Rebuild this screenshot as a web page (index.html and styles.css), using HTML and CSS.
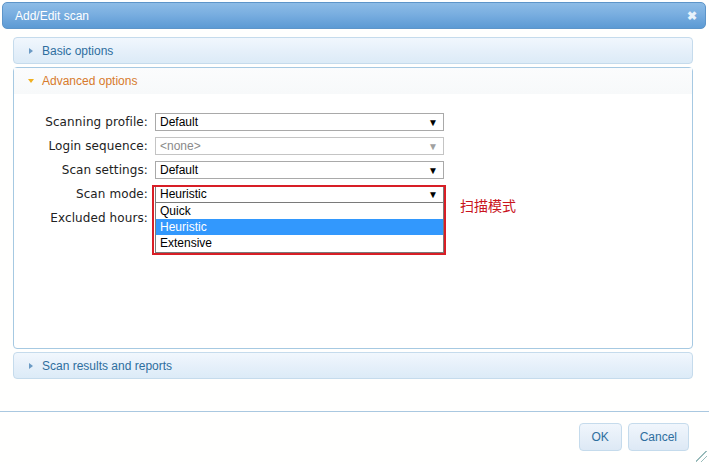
FILE: index.html
```html
<!DOCTYPE html>
<html>
<head>
<meta charset="utf-8">
<link rel="stylesheet" href="styles.css">
</head>
<body>
<div class="dialog">
  <div class="titlebar">
    <span class="title">Add/Edit scan</span>
    <span class="close">&#x2716;</span>
  </div>
  <div class="body">
    <div class="panel collapsed">
      <div class="phead"><span class="arrow right"></span><span class="ptext">Basic options</span></div>
    </div>
    <div class="panel open">
      <div class="phead"><span class="arrow down"></span><span class="ptext">Advanced options</span></div>
      <div class="pcontent">
        <div class="form">
          <label>Scanning profile:</label>
          <div class="select"><span>Default</span><span class="caret">&#9660;</span></div>
          <label>Login sequence:</label>
          <div class="select disabled"><span>&lt;none&gt;</span><span class="caret">&#9660;</span></div>
          <label>Scan settings:</label>
          <div class="select"><span>Default</span><span class="caret">&#9660;</span></div>
          <label>Scan mode:</label>
          <div class="dropwrap">
            <div class="select active"><span>Heuristic</span><span class="caret">&#9660;</span></div>
            <ul class="droplist">
              <li>Quick</li>
              <li class="sel">Heuristic</li>
              <li>Extensive</li>
            </ul>
            <div class="redbox"></div>
            <span class="note">扫描模式</span>
          </div>
          <label>Excluded hours:</label>
          <div class="select hidden"></div>
        </div>
      </div>
    </div>
    <div class="panel collapsed">
      <div class="phead"><span class="arrow right"></span><span class="ptext">Scan results and reports</span></div>
    </div>
  </div>
  <div class="footer">
    <button class="btn">OK</button>
    <button class="btn">Cancel</button>
    <span class="grip"></span>
  </div>
</div>
</body>
</html>
```
FILE: styles.css
```css
html, body {
  margin: 0;
  padding: 0;
  background: #fffffe;
}
.dialog {
  width: 709px;
  height: 464px;
  position: relative;
  font-family: "Liberation Sans", Arial, sans-serif;
  font-size: 12px;
  background: #fffffe;
  overflow: hidden;
}
.titlebar {
  margin: 2px 3px 0 2px;
  height: 27px;
  border-radius: 5px;
  border: 1px solid #5d95c9;
  box-sizing: border-box;
  background: linear-gradient(#8dbce6 0%, #79aee0 45%, #5c9ad4 100%);
  display: flex;
  align-items: center;
  justify-content: space-between;
  padding: 0 8px 0 12px;
}
.title {
  color: #fff;
  font-size: 12px;
}
.close {
  color: #e8f2fb;
  font-size: 12px;
  font-weight: bold;
}
.body {
  padding: 8px 16px 0 13px;
  display: flex;
  flex-direction: column;
  gap: 3px;
}
.panel {
  border: 1px solid #c5dbec;
  border-radius: 4px;
  box-sizing: border-box;
}
.panel.collapsed {
  height: 27px;
  background: linear-gradient(#f1f7fd 0%, #e6f0fa 50%, #dcebf7 100%);
}
.panel.open {
  height: 282px;
  background: #fff;
  border-color: #a6c9e2;
}
.phead {
  height: 25px;
  display: flex;
  align-items: center;
  padding-left: 14px;
}
.panel.open .phead {
  height: 26px;
  background: linear-gradient(#fbfcfd, #f7f9fa);
}
.ptext {
  color: #2e6e9e;
  margin-left: 8px;
}
.panel.open .ptext {
  color: #d77a2c;
}
.arrow {
  width: 0;
  height: 0;
  display: inline-block;
}
.arrow.right {
  border-top: 3px solid transparent;
  border-bottom: 3px solid transparent;
  border-left: 4px solid #6b9ac4;
  margin-left: 1px;
  margin-right: 1px;
}
.arrow.down {
  border-left: 3px solid transparent;
  border-right: 3px solid transparent;
  border-top: 4px solid #f0b020;
}
.pcontent {
  padding-top: 19px;
}
.form {
  display: grid;
  grid-template-columns: 134px 289px;
  column-gap: 7px;
  row-gap: 6px;
  align-items: center;
}
.form label {
  text-align: right;
  font-family: "DejaVu Sans", Tahoma, sans-serif;
  font-size: 12px;
  color: #222;
  letter-spacing: 0.1px;
}
.select {
  height: 18px;
  box-sizing: border-box;
  border: 1px solid #a9a9a9;
  background: #fff;
  display: flex;
  align-items: center;
  justify-content: space-between;
  padding: 0 5px 0 4px;
  color: #000;
  font-size: 12px;
}
.select.disabled {
  color: #8a8a8a;
  border-color: #c4c4c4;
}
.select.disabled .caret {
  color: #a0a0a0;
}
.caret {
  font-size: 10px;
}
.select.hidden {
  visibility: hidden;
}
.dropwrap {
  position: relative;
}
.select.active {
  border-color: #7a7a7a;
}
.droplist {
  position: absolute;
  left: 0;
  top: 18px;
  width: 289px;
  box-sizing: border-box;
  margin: 0;
  padding: 0 0 1px;
  list-style: none;
  background: #fff;
  border: 1px solid #7a7a7a;
  border-top: 0;
  z-index: 2;
}
.droplist li {
  height: 16px;
  line-height: 16px;
  padding-left: 4px;
  font-size: 12px;
  color: #000;
}
.droplist li.sel {
  background: #3298fd;
  color: #fff;
}
.redbox {
  position: absolute;
  left: -3px;
  top: 0;
  width: 290px;
  height: 66px;
  border: 2px solid #d81e26;
  z-index: 3;
}
.note {
  position: absolute;
  left: 305px;
  top: 10px;
  color: #c9141d;
  font-family: "Noto Sans CJK SC", sans-serif;
  font-size: 14px;
  white-space: nowrap;
}
.footer {
  position: absolute;
  left: 0;
  right: 0;
  top: 411px;
  bottom: 0;
  border-top: 1px solid #aac8e0;
  display: flex;
  justify-content: flex-end;
  align-items: flex-start;
  gap: 6px;
  padding: 11px 20px 0 0;
}
.btn {
  height: 28px;
  border: 1px solid #c5dbec;
  border-radius: 4px;
  background: linear-gradient(#f0f6fc, #dde9f5);
  color: #2e6e9e;
  font-family: "Liberation Sans", Arial, sans-serif;
  font-size: 12px;
  padding: 0 11px;
}
.btn:first-child {
  width: 43px;
}
.grip {
  position: absolute;
  right: 2px;
  bottom: 2px;
  width: 11px;
  height: 11px;
  background: linear-gradient(135deg, transparent 45%, #9bb 45%, #9bb 52%, transparent 52%, transparent 70%, #9bb 70%, #9bb 77%, transparent 77%);
}
```
